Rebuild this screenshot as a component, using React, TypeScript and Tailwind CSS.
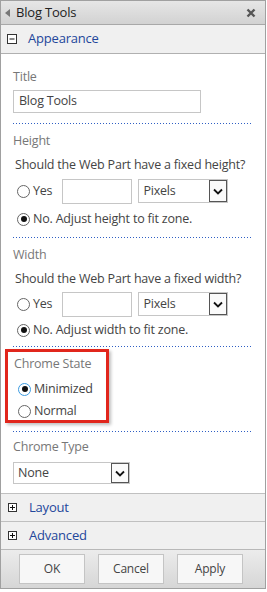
import React from 'react';

const font = { fontFamily: '"Open Sans", "Noto Sans", sans-serif' };

function Dotted() {
  return <div className="h-px bg-[linear-gradient(to_right,#2f5fc4_1px,transparent_1px)] bg-[length:3px_1px]" />;
}

function Radio({ checked, focus }: { checked?: boolean; focus?: boolean }) {
  return (
    <span
      className={`flex h-[13px] w-[13px] shrink-0 items-center justify-center rounded-full border bg-white ${
        focus ? 'border-[#3c9be0]' : 'border-[#666]'
      }`}
    >
      {checked && <span className="h-[6px] w-[6px] rounded-full bg-[#111]" />}
    </span>
  );
}

function Select({ value, width, height }: { value: string; width: string; height: string }) {
  return (
    <div className={`flex items-center justify-between border border-[#c6c6c6] bg-white pl-[4px] ${width} ${height}`}>
      <span className="text-[12.5px] tracking-[-0.2px] text-[#444]">{value}</span>
      <span className="flex h-full w-[18px] items-center justify-center border border-[#555] bg-[#fafafa]">
        <svg width="10" height="7" viewBox="0 0 10 7">
          <path d="M1 1.5 L5 5.5 L9 1.5" fill="none" stroke="#111" strokeWidth="1.8" />
        </svg>
      </span>
    </div>
  );
}

function SizeSection({ label, question, noText, tight }: { label: string; question: string; noText: string; tight?: boolean }) {
  return (
    <div className="flex flex-col">
      <div className="mt-[8px] h-[18px] leading-[18px] text-[#777]">{label}</div>
      <div className="mt-[6px] h-[18px] whitespace-nowrap pl-[2px] leading-[18px] text-[#444]">{question}</div>
      <div className={`${tight ? 'mt-[3px]' : 'mt-[4px]'} flex h-[26px] items-center pl-[4px]`}>
        <Radio />
        <span className="ml-[3px] text-[#444]">Yes</span>
        <div className="ml-[10px] h-[25px] w-[70px] border border-[#c6c6c6] bg-white" />
        <div className="ml-[6px]">
          <Select value="Pixels" width="w-[90px]" height="h-[24px]" />
        </div>
      </div>
      <div className={`${tight ? 'mt-0' : 'mt-[2px]'} flex h-[26px] items-center pl-[4px]`}>
        <Radio checked />
        <span className="ml-[3px] text-[#444]">{noText}</span>
      </div>
    </div>
  );
}

function PlusRow({ label }: { label: string }) {
  return (
    <div className="flex h-[28px] items-center border-t border-[#c0c0c0] bg-[#f0f0f0] pl-[7px]">
      <span className="flex h-[9px] w-[9px] items-center justify-center border border-[#333] bg-white">
        <svg width="7" height="7" viewBox="0 0 7 7">
          <path d="M1 3.5 H6 M3.5 1 V6" stroke="#111" strokeWidth="1" />
        </svg>
      </span>
      <span className="ml-[12px] text-[13px] text-[#23479b]">{label}</span>
    </div>
  );
}

export default function App() {
  return (
    <div className="h-[592px] w-[267px] bg-white text-[12.5px] tracking-[-0.2px]" style={font}>
      <div className="flex w-[266px] flex-col border border-[#a0a0a0]">
        <div className="flex h-[24px] items-center justify-between border-b border-[#a8a8a8] bg-gradient-to-b from-[#e6e6e6] to-[#d2d2d2] pl-[4px] pr-[9px]">
          <div className="flex items-center">
            <svg width="5" height="8" viewBox="0 0 5 8">
              <path d="M5 0 L0 4 L5 8 Z" fill="#777" />
            </svg>
            <span className="ml-[6px] text-[13px] text-[#222]">Blog Tools</span>
          </div>
          <svg width="10" height="10" viewBox="0 0 10 10">
            <path d="M1.5 1.5 L8.5 8.5 M8.5 1.5 L1.5 8.5" stroke="#555" strokeWidth="2.4" />
          </svg>
        </div>

        <div className="flex h-[29px] items-center border-b border-[#b0b0b0] bg-[#f0f0f0] pl-[6px]">
          <span className="flex h-[10px] w-[10px] items-center justify-center border border-[#333] bg-white">
            <svg width="8" height="8" viewBox="0 0 8 8">
              <path d="M1.5 4 H6.5" stroke="#111" strokeWidth="1" />
            </svg>
          </span>
          <span className="ml-[11px] text-[13px] text-[#23479b]">Appearance</span>
        </div>

        <div className="flex flex-col px-[12px]">
          <div className="mt-[14px] h-[18px] leading-[18px] text-[#777]">Title</div>
          <div className="mt-[4px] flex h-[23px] w-[188px] items-center border border-[#c6c6c6] bg-white pl-[5px] text-[#444]">
            Blog Tools
          </div>
          <div className="mt-[10px]">
            <Dotted />
          </div>

          <SizeSection label="Height" question="Should the Web Part have a fixed height?" noText="No. Adjust height to fit zone." />
          <div className="mt-[5px]">
            <Dotted />
          </div>
          <SizeSection tight label="Width" question="Should the Web Part have a fixed width?" noText="No. Adjust width to fit zone." />
          <div className="mt-[3px]">
            <Dotted />
          </div>

          <div className="-ml-[8px] mt-[2px] w-[104px] border-[3px] border-[#e1261c] pl-[6px] shadow-[2px_2px_3px_rgba(0,0,0,0.25)]">
            <div className="mt-[3px] h-[18px] leading-[18px] text-[#777]">Chrome State</div>
            <div className="mt-[7px] flex h-[18px] items-center pl-[4px]">
              <Radio checked focus />
              <span className="ml-[3px] text-[#444]">Minimized</span>
            </div>
            <div className="mt-[4px] flex h-[18px] items-center pl-[4px]">
              <Radio />
              <span className="ml-[3px] text-[#444]">Normal</span>
            </div>
          </div>
          <div className="mt-[8px]">
            <Dotted />
          </div>
          <div className="mt-[6px] h-[18px] leading-[18px] text-[#777]">Chrome Type</div>
          <div className="mb-[9px] mt-[6px]">
            <Select value="None" width="w-[117px]" height="h-[22px]" />
          </div>
        </div>

        <PlusRow label="Layout" />
        <PlusRow label="Advanced" />

        <div className="flex h-[39px] items-center justify-center gap-[13px] border-t border-[#b8b8b8] bg-gradient-to-b from-[#ececec] to-[#d6d6d6] pr-[4px]">
          {['OK', 'Cancel', 'Apply'].map((b) => (
            <button
              key={b}
              className="flex h-[30px] w-[66px] items-center justify-center border border-[#c4c4c4] bg-[#f7f7f7] text-[12px] text-[#444]"
            >
              {b}
            </button>
          ))}
        </div>
      </div>
    </div>
  );
}
